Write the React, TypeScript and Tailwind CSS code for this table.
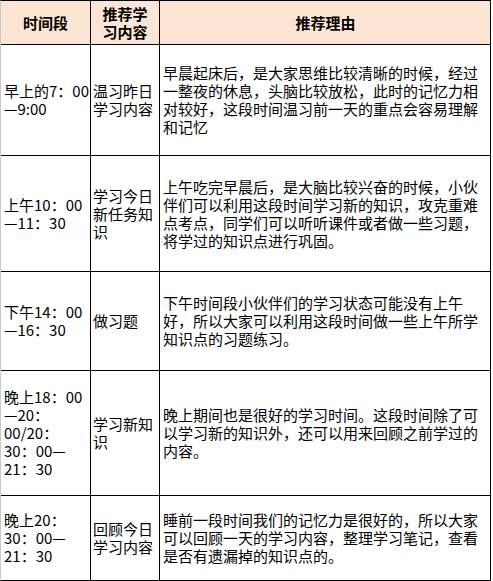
const rows = [
  {
    h: 'h-[111px]',
    time: ['早上的7：00', '—9:00'],
    what: ['温习昨日', '学习内容'],
    why: [
      '早晨起床后，是大家思维比较清晰的时候，经过',
      '一整夜的休息，头脑比较放松，此时的记忆力相',
      '对较好，这段时间温习前一天的重点会容易理解',
      '和记忆',
    ],
  },
  {
    h: 'h-[116px]',
    time: ['上午10：00', '—11：30'],
    what: ['学习今日', '新任务知', '识'],
    why: [
      '上午吃完早晨后，是大脑比较兴奋的时候，小伙',
      '伴们可以利用这段时间学习新的知识，攻克重难',
      '点考点，同学们可以听听课件或者做一些习题，',
      '将学过的知识点进行巩固。',
    ],
  },
  {
    h: 'h-[99px]',
    time: ['下午14：00', '—16：30'],
    what: ['做习题'],
    why: [
      '下午时间段小伙伴们的学习状态可能没有上午',
      '好，所以大家可以利用这段时间做一些上午所学',
      '知识点的习题练习。',
    ],
  },
  {
    h: 'h-[125px]',
    time: ['晚上18：00', '—20：', '00/20：', '30：00—', '21：30'],
    what: ['学习新知', '识'],
    why: [
      '晚上期间也是很好的学习时间。这段时间除了可',
      '以学习新的知识外，还可以用来回顾之前学过的',
      '内容。',
    ],
  },
  {
    h: 'h-[84px]',
    time: ['晚上20：', '30：00—', '21：30'],
    what: ['回顾今日', '学习内容'],
    why: [
      '睡前一段时间我们的记忆力是很好的，所以大家',
      '可以回顾一天的学习内容，整理学习笔记，查看',
      '是否有遗漏掉的知识点的。',
    ],
  },
];

function Lines({ lines }: { lines: string[] }) {
  return (
    <div>
      {lines.map((l, i) => (
        <div key={i} className="whitespace-nowrap">{l}</div>
      ))}
    </div>
  );
}

export default function App() {
  return (
    <div className="w-[493px] h-[581px] bg-white text-black text-[15px] leading-[18px] font-['Noto_Sans_CJK_SC','Noto_Sans',sans-serif]">
      <div className="w-[491px] border-t border-r border-b border-black border-l border-l-[#c9c9c9]">
        {/* header */}
        <div className="grid grid-cols-[90px_69px_331px] h-[44px] bg-[#fde5d6] border-b border-black font-bold">
          <div className="border-r border-black flex items-center justify-center">时间段</div>
          <div className="border-r border-black flex items-center justify-center text-center">
            <Lines lines={['推荐学', '习内容']} />
          </div>
          <div className="flex items-center justify-center">推荐理由</div>
        </div>
        {rows.map((r, i) => (
          <div
            key={i}
            className={`grid grid-cols-[90px_69px_331px] ${r.h} ${i < rows.length - 1 ? 'border-b border-black' : ''}`}
          >
            <div className="border-r border-black flex items-center pl-[3px]">
              <Lines lines={r.time} />
            </div>
            <div className="border-r border-black flex items-center pl-[2px]">
              <Lines lines={r.what} />
            </div>
            <div className="flex items-center pl-[3px]">
              <Lines lines={r.why} />
            </div>
          </div>
        ))}
      </div>
    </div>
  );
}
